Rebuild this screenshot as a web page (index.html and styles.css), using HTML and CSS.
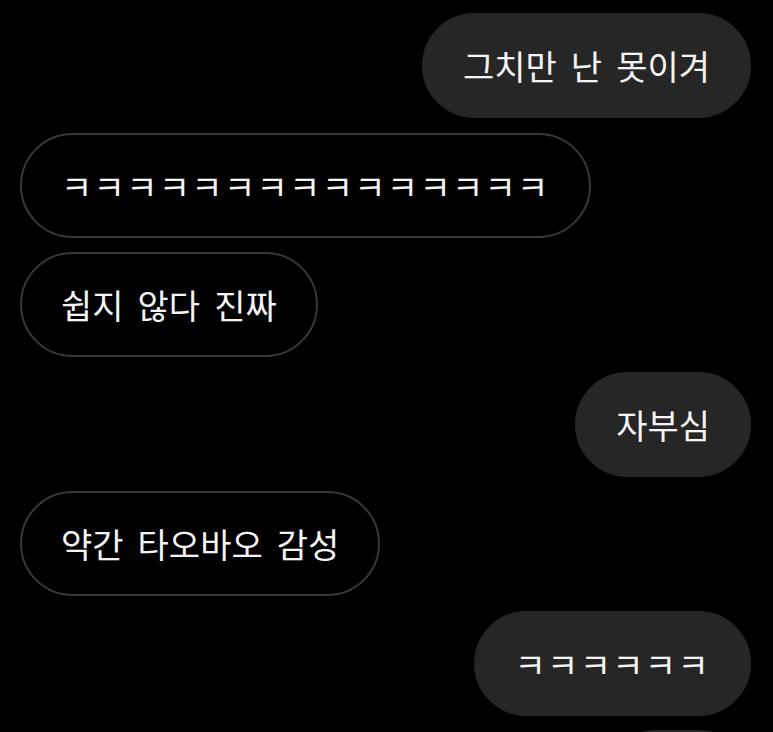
FILE: index.html
```html
<!DOCTYPE html>
<html lang="ko">

<head>
    <meta charset="UTF-8">
    <meta name="viewport" content="width=device-width, initial-scale=1.0">
    <title>chat</title>
    <link rel="stylesheet" href="styles.css">
</head>

<body>
    <div class="chat">
        <p class="msg mine">그치만 난 못이겨</p>
        <p class="msg theirs laugh">ㅋㅋㅋㅋㅋㅋㅋㅋㅋㅋㅋㅋㅋㅋㅋ</p>
        <p class="msg theirs">쉽지 않다 진짜</p>
        <p class="msg mine">자부심</p>
        <p class="msg theirs">약간 타오바오 감성</p>
        <p class="msg mine laugh">ㅋㅋㅋㅋㅋㅋ</p>
        <p class="msg mine laugh">ㅋㅋ</p>
    </div>
</body>

</html>
```

FILE: styles.css
```css
body {
    margin: 0;
    background-color: #000000;
    overflow: hidden;
}

.chat {
    display: flex;
    flex-direction: column;
    gap: 14.5px;
    padding: 13px 22px 0 20px;
}

.msg {
    margin: 0;
    width: fit-content;
    padding: 28px 39px;
    border: 2px solid transparent;
    border-radius: 60px;
    font-family: "Noto Sans CJK KR", "Noto Sans", sans-serif;
    font-size: 34px;
    line-height: 45px;
    word-spacing: 4.5px;
    color: #f4f4f4;
    white-space: nowrap;
}

.laugh {
    letter-spacing: 1.3px;
}

.mine {
    align-self: flex-end;
    background-color: #262626;
    border-color: #262626;
}

.theirs {
    align-self: flex-start;
    border-color: #383838;
}
```
